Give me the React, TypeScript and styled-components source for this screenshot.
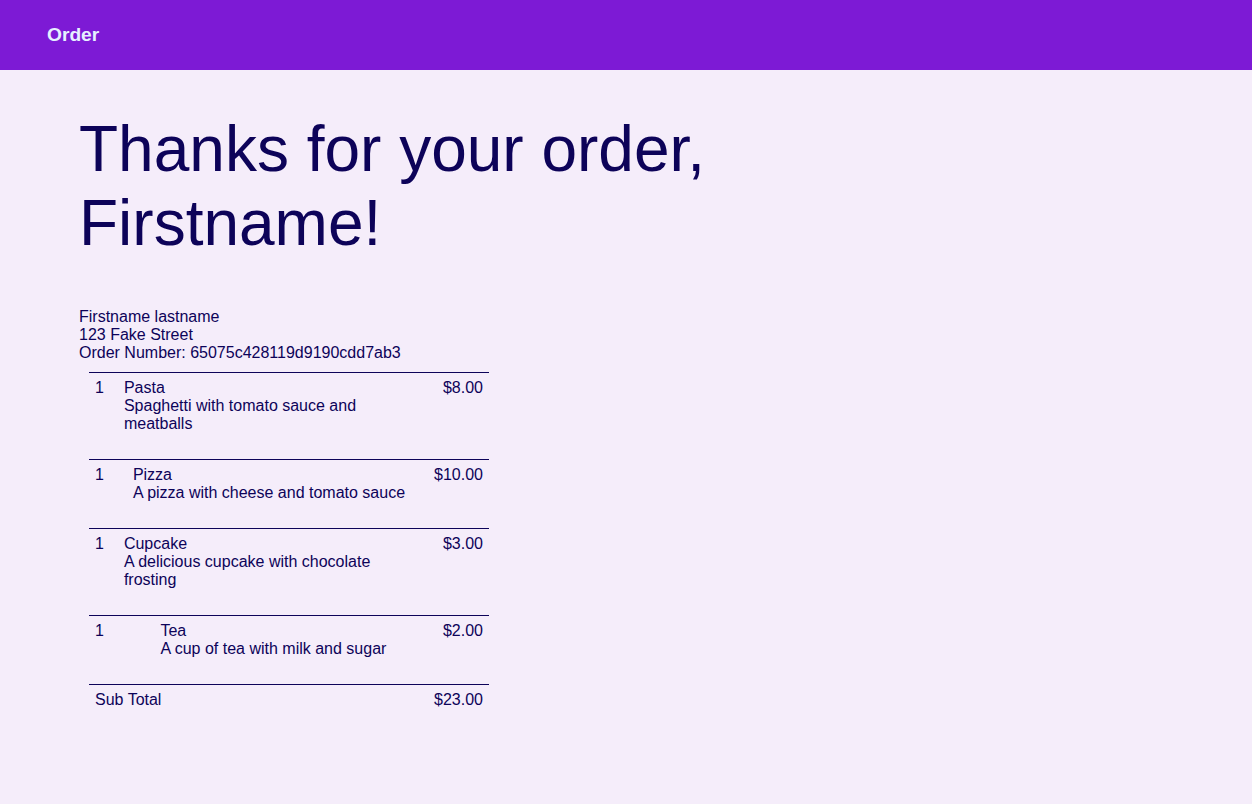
import React from "react";
import styled, { createGlobalStyle } from "styled-components";

const GlobalStyle = createGlobalStyle`
  html, body {
    margin: 0;
    padding: 0;
    background: #f5edfa;
  }
  body {
    font-family: "Liberation Sans", Arial, sans-serif;
    color: #0d0359;
    font-size: 16px;
  }
`;

const Page = styled.div`
  min-height: 804px;
  background: #f5edfa;
`;

const Header = styled.header`
  height: 70px;
  background: #7d1ad5;
  display: flex;
  align-items: center;
  padding-left: 47px;
  box-sizing: border-box;
`;

const Brand = styled.div`
  color: #e6f1ff;
  font-weight: bold;
  font-size: 19.2px;
`;

const Main = styled.main`
  padding-left: 79px;
`;

const Title = styled.h1`
  font-size: 64px;
  font-weight: normal;
  line-height: normal;
  margin: 42px 0 48px;
  max-width: 700px;
  color: #0d0359;
`;

const Address = styled.div`
  line-height: 18px;
  margin-bottom: 10px;
`;

const Items = styled.div`
  margin-left: 10px;
  width: 400px;
`;

const Row = styled.div<{ $last?: boolean }>`
  display: flex;
  justify-content: space-between;
  align-items: flex-start;
  gap: 20px;
  border-top: 1px solid #0d0359;
  padding: 6px 6px ${(p) => (p.$last ? "5px" : "26px")};
  box-sizing: border-box;
  line-height: 18px;
`;

const Qty = styled.div`
  flex: none;
`;

const Info = styled.div`
  flex: 0 1 auto;
`;

const Price = styled.div`
  flex: none;
  text-align: right;
`;

type Item = { qty: number; name: string; desc: string; price: string };

const items: Item[] = [
  { qty: 1, name: "Pasta", desc: "Spaghetti with tomato sauce and meatballs", price: "$8.00" },
  { qty: 1, name: "Pizza", desc: "A pizza with cheese and tomato sauce", price: "$10.00" },
  { qty: 1, name: "Cupcake", desc: "A delicious cupcake with chocolate frosting", price: "$3.00" },
  { qty: 1, name: "Tea", desc: "A cup of tea with milk and sugar", price: "$2.00" },
];

export default function App() {
  return (
    <Page>
      <GlobalStyle />
      <Header>
        <Brand>Order</Brand>
      </Header>
      <Main>
        <Title>Thanks for your order, Firstname!</Title>
        <Address>
          <div>Firstname lastname</div>
          <div>123 Fake Street</div>
          <div>Order Number: 65075c428119d9190cdd7ab3</div>
        </Address>
        <Items>
          {items.map((it) => (
            <Row key={it.name}>
              <Qty>{it.qty}</Qty>
              <Info>
                <div>{it.name}</div>
                <div>{it.desc}</div>
              </Info>
              <Price>{it.price}</Price>
            </Row>
          ))}
          <Row $last>
            <div>Sub Total</div>
            <Price>$23.00</Price>
          </Row>
        </Items>
      </Main>
    </Page>
  );
}
